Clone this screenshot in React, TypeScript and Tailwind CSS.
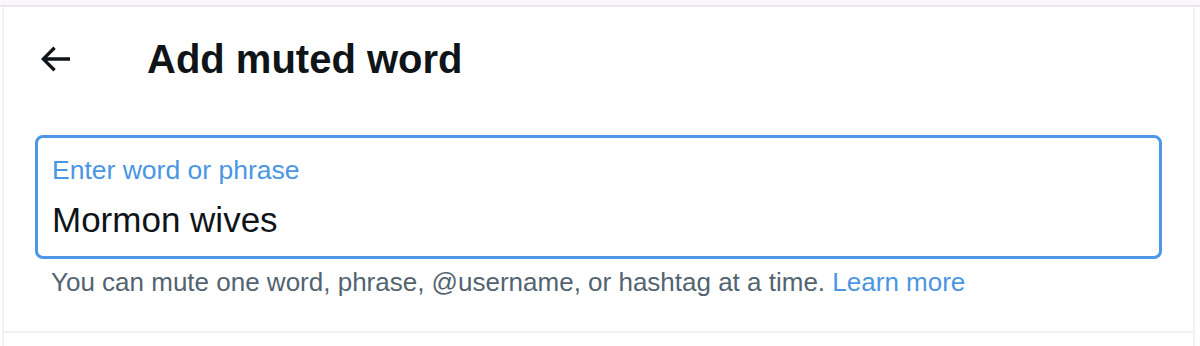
import React from 'react';

const BackArrow: React.FC = () => (
  <svg viewBox="0 0 24 24" className="w-[40px] h-[40px] text-[#0f1419]" fill="currentColor">
    <path d="M7.414 13l5.043 5.04-1.414 1.42L3.586 12l7.457-7.46 1.414 1.42L7.414 11H21v2H7.414z" />
  </svg>
);

const App: React.FC = () => {
  return (
    <div
      className="w-[1200px] h-[346px] bg-white overflow-hidden flex flex-col"
      style={{ fontFamily: '"Liberation Sans", Arial, sans-serif' }}
    >
      {/* top strip */}
      <div className="h-[7px] shrink-0 bg-[#fbf6fb] border-b-2 border-[#ede4ed]" />

      <div className="ml-[2px] w-[1193px] flex-1 border-l-2 border-r-2 border-[#eff3f4] flex flex-col">
        {/* header */}
        <div className="h-[80px] mt-[12px] flex items-center pl-[31px]">
          <BackArrow />
          <h1 className="ml-[72px] text-[40px] leading-[50px] font-bold text-[#0f1419]">Add muted word</h1>
        </div>

        {/* field */}
        <div className="px-[31px] pt-[36px] pb-[33px] border-b-2 border-[#eff3f4]">
          <label className="block rounded-[8px] border-[3px] border-[#4c97e6] pl-[14px] pr-4 pt-[16px] pb-[16px]">
            <div className="text-[26.5px] leading-[32px] text-[#4a96e4]">Enter word or phrase</div>
            <div className="mt-[14px] text-[35px] leading-[40px] text-[#0f1419]">Mormon wives</div>
          </label>
          <p className="mt-[7px] pl-[16px] text-[26px] leading-[32px] text-[#536471]">
            You can mute one word, phrase, @username, or hashtag at a time.{' '}
            <span className="text-[#4a96e4]">Learn more</span>
          </p>
        </div>
      </div>
    </div>
  );
};

export default App;
